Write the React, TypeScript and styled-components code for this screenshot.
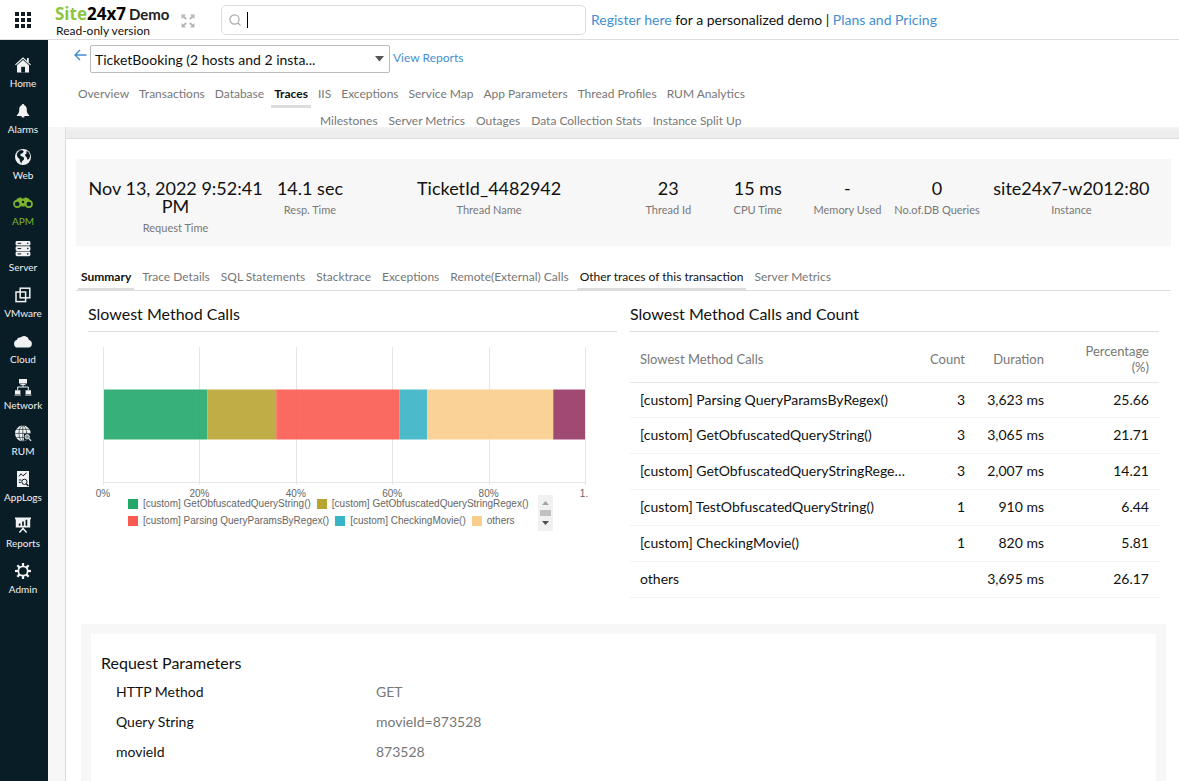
import React from "react";
import styled, { createGlobalStyle, css } from "styled-components";

const GlobalStyle = createGlobalStyle`
  * { box-sizing: border-box; }
  body {
    margin: 0;
    background: #fff;
    color: #111;
    font-family: Lato, "Liberation Sans", sans-serif;
    font-size: 14px;
  }
  h1, h2, p, dl, dd, ul { margin: 0; padding: 0; font-weight: 400; }
  button { font: inherit; border: 0; background: none; padding: 0; color: inherit; cursor: pointer; }
  a { text-decoration: none; }
`;

const Page = styled.div`
  min-height: 100vh;
  display: flex;
  flex-direction: column;
`;

const TopBar = styled.header`
  height: 40px;
  display: flex;
  align-items: center;
  border-bottom: 1px solid #ddd;
`;

const AppsButton = styled.button`
  width: 16px;
  height: 16px;
  margin: 0 24px 0 15px;
  display: flex;
`;

const Brand = styled.div`
  width: 126px;
  padding-top: 3px;
  display: flex;
  flex-direction: column;
`;

const BrandName = styled.div`
  display: flex;
  align-items: baseline;
  gap: 3px;
  font: 700 17px/20px "Open Sans", sans-serif;
  color: #000;
`;

const BrandGreen = styled.span`
  color: #8cc63f;
`;

const DemoWord = styled.span`
  font: 700 15px/20px Lato, sans-serif;
  color: #222;
`;

const BrandNote = styled.div`
  padding-left: 1px;
  font-size: 12px;
  line-height: 14px;
`;

const ExpandButton = styled.button`
  display: flex;
  width: 14px;
  height: 14px;
  margin-top: 2px;
`;

const SearchBox = styled.label`
  display: flex;
  align-items: center;
  flex: 0 1 365px;
  height: 30px;
  margin: 0 5px 0 26px;
  padding: 0 7px;
  border: 1px solid #ddd;
  border-radius: 5px;
`;

const Caret = styled.span`
  width: 1px;
  height: 16px;
  margin-left: 6px;
  background: #000;
`;

const SearchInput = styled.input`
  flex: 1;
  min-width: 0;
  border: 0;
  outline: 0;
  background: none;
  font: inherit;
`;

const Promo = styled.p`
  font-size: 14px;
  line-height: 18px;
  white-space: nowrap;
`;

const Link = styled.a<{ $small?: boolean }>`
  color: #3f8fd2;
  font-size: ${(p) => (p.$small ? 12 : 14)}px;
`;

const Body = styled.div`
  flex: 1;
  display: flex;
`;

const SideBar = styled.nav`
  width: 48px;
  flex: none;
  padding: 11px 2px 0 0;
  background: #091d27;
`;

const SideLink = styled.a<{ $active?: boolean }>`
  height: 46px;
  display: flex;
  flex-direction: column;
  align-items: center;
  gap: 1px;
  padding-top: 4px;
  color: ${(p) => (p.$active ? "#7db32f" : "#f2f2f2")};
  font-size: 10px;
  line-height: 14px;
`;

const Main = styled.main`
  flex: 1;
  min-width: 0;
  display: flex;
  flex-direction: column;
`;

const MonitorHead = styled.div`
  height: 87px;
  flex: none;
`;

const MonitorRow = styled.div`
  display: flex;
  align-items: flex-start;
  padding: 5px 0 0 26px;
`;

const BackButton = styled.button`
  display: flex;
  width: 13px;
  height: 12px;
  margin: 4px 3px 0 0;
  color: #3f8fd2;
`;

const SelectWrap = styled.div`
  display: grid;
  width: 300px;
  margin-right: 3px;
  align-items: center;
  & > * { grid-area: 1 / 1; }
`;

const MonitorSelect = styled.select`
  appearance: none;
  height: 28px;
  padding: 2px 4px 0;
  border: 1px solid #bbb;
  border-radius: 2px;
  background: #fff;
  color: #111;
  font: 14px/20px Lato, sans-serif;
`;

const SelectArrow = styled.svg`
  justify-self: end;
  margin-right: 6px;
  pointer-events: none;
`;

const ReportsSlot = styled.div`
  padding-top: 4px;
  line-height: 16px;
`;

const TabRow = styled.div<{ $second?: boolean; $lined?: boolean }>`
  display: flex;
  gap: ${(p) => (p.$second || p.$lined ? 5 : 4)}px;
  padding-left: ${(p) => (p.$second ? 269 : 27)}px;
  margin-top: ${(p) => (p.$second ? 1 : 9)}px;
  ${(p) =>
    p.$lined &&
    css`
      margin: 19px 0 0;
      padding-left: 2px;
      border-bottom: 1px solid #ddd;
    `}
`;

const Tab = styled.button<{ $bold?: boolean; $on?: boolean; $flush?: boolean }>`
  padding: 4px 3px 3px;
  border-bottom: ${(p) => (p.$flush ? 2 : 3)}px solid ${(p) => (p.$on ? "#ddd" : "transparent")};
  color: ${(p) => (p.$on ? "#111" : "#777")};
  font-size: 12px;
  font-weight: ${(p) => (p.$bold ? 700 : 400)};
  line-height: 16px;
  white-space: nowrap;
`;

const Canvas = styled.div`
  flex: 1;
  display: flex;
  padding-left: 17px;
  background: #f7f7f7;
`;

const Panel = styled.div`
  flex: 1;
  min-width: 0;
  display: flex;
  flex-direction: column;
  border-left: 1px solid #ddd;
  background: #fff;
`;

const Band = styled.div`
  height: 12px;
  flex: none;
  background: linear-gradient(#f4f4f4, #ededed 5px);
  border-bottom: 1px solid #ddd;
`;

const PanelBody = styled.div`
  flex: 1;
  display: flex;
  flex-direction: column;
  padding: 20px 8px 0 10px;
`;

const Stats = styled.dl`
  display: grid;
  grid-template-columns: 2fr 1fr 3fr 1fr 1fr 1fr 1fr 2fr;
  padding: 20px 10px 10px;
  background: #f7f7f7;
`;

const Stat = styled.div`
  display: flex;
  flex-direction: column-reverse;
  justify-content: flex-end;
  gap: 5px;
  text-align: center;
`;

const StatLabel = styled.dt`
  color: #777;
  font-size: 11px;
  line-height: 16px;
  white-space: nowrap;
`;

const StatValue = styled.dd`
  font-size: 18px;
  line-height: 18px;
`;

const Columns = styled.div`
  display: grid;
  grid-template-columns: 1fr 1fr;
  gap: 13px;
  padding: 13px 12px 0;
`;

const Section = styled.section`
  min-width: 0;
`;

const SectionTitle = styled.h2<{ $lined?: boolean }>`
  padding-bottom: ${(p) => (p.$lined ? 7 : 0)}px;
  border-bottom: ${(p) => (p.$lined ? "1px solid #ddd" : 0)};
  font-size: 16px;
  line-height: 20px;
`;

const ChartBox = styled.div`
  padding-top: 15px;
`;

const Legend = styled.div`
  display: flex;
  gap: 6px;
  padding-left: 40px;
  margin-top: -4px;
  color: #666;
  font: 10px/17px "Liberation Sans", sans-serif;
`;

const LegendItems = styled.ul`
  width: 404px;
  display: flex;
  flex-wrap: wrap;
  align-content: flex-start;
  column-gap: 6px;
  list-style: none;
`;

const LegendItem = styled.li<{ $color: string }>`
  display: flex;
  align-items: center;
  gap: 5px;
  white-space: nowrap;
  &::before {
    content: "";
    width: 10px;
    height: 10px;
    background: ${(p) => p.$color};
  }
`;

const LegendScroll = styled.div`
  width: 15px;
  height: 36px;
  display: flex;
  flex-direction: column;
  align-items: center;
  justify-content: space-between;
  padding: 6px 0;
  background: #f1f1f1;
`;

const ScrollArrow = styled.button<{ $dim?: boolean }>`
  display: flex;
  color: ${(p) => (p.$dim ? "#a3a3a3" : "#505050")};
`;

const ScrollThumb = styled.div`
  width: 11px;
  height: 6px;
  background: #c1c1c1;
`;

const Table = styled.table`
  width: 100%;
  table-layout: fixed;
  border-collapse: collapse;
  tbody tr:first-child td { height: 35px; }
`;

const Th = styled.th<{ $w?: number }>`
  width: ${(p) => (p.$w ? p.$w + "px" : "auto")};
  height: 50px;
  padding: 5px 10px 0;
  border-bottom: 1px solid #e8e8e8;
  color: #777;
  font-size: 13px;
  font-weight: 400;
  line-height: 16px;
  text-align: ${(p) => (p.$w ? "right" : "left")};
`;

const Td = styled.td<{ $num?: boolean }>`
  height: 36px;
  padding: 0 10px;
  border-bottom: 1px solid #f3f3f3;
  font-size: 14px;
  line-height: 16px;
  text-align: ${(p) => (p.$num ? "right" : "left")};
  white-space: nowrap;
  overflow: hidden;
  text-overflow: ellipsis;
`;

const Params = styled.section`
  flex: 1;
  margin: 26px 5px 0;
  padding: 19px 0 15px 10px;
  border: 10px solid #f7f7f7;
  border-bottom: 0;
`;

const ParamList = styled.dl`
  padding-top: 4px;
`;

const ParamRow = styled.div`
  display: grid;
  grid-template-columns: 1fr 3fr;
  padding-left: 15px;
  font-size: 14px;
  line-height: 30px;
`;

const ParamValue = styled.dd`
  color: #777;
`;

type IconName =
  | "home" | "bell" | "web" | "apm" | "server" | "vm"
  | "cloud" | "network" | "rum" | "logs" | "reports" | "admin";

const BG = "#091d27";

const drawings: Record<IconName, React.ReactNode> = {
  home: (
    <>
      <path d="M10 4.600 4 9.800V17.600H16V9.800Z" />
      <path d="M14 3h1.800v4h-1.800z" />
      <path d="M2.400 9.800 10 3l7.600 6.800" fill="none" stroke="currentColor" strokeWidth="1.100" />
      <path d="M3.400 10.600 10 4.700l6.600 5.900" fill="none" stroke={BG} strokeWidth=".6" />
      <path d="M8.200 11.800h3.800v5.800H8.200z" fill={BG} />
    </>
  ),
  bell: (
    <path d="M10 3c-.8 0-1.300.6-1.300 1.300C6.800 4.900 6.200 6.800 6.200 9c0 2.600-.8 4-2.400 5.200v.8h4.600a1.600 1.600 0 0 0 3.200 0h4.600v-.8c-1.600-1.200-2.400-2.600-2.400-5.200 0-2.200-.6-4.100-2.500-4.700 0-.7-.5-1.300-1.300-1.300Z" />
  ),
  web: (
    <>
      <circle cx="10" cy="10" r="8" />
      <path d="M6.500 3.600 9.400 3l1.400 1.800-1.600 1.600-1.400.4-.6 1.800 2 .8 2 1.400-.4 2-1.800 1.400-.6 2.400-1.400-2-.4-2.600-1.800-1.400-1-2.400.4-2Z" fill={BG} />
      <path d="m13.200 4.200 1.800.4 1.600 2.400.6 2-1.200 3-1.600.8-.6-2.400-1.400-1.200-.4-1.800 1.600-1Z" fill={BG} />
    </>
  ),
  apm: (
    <>
      <circle cx="4.200" cy="11" r="3.200" fill="none" stroke="currentColor" strokeWidth="1.700" />
      <circle cx="15.800" cy="11" r="3.200" fill="none" stroke="currentColor" strokeWidth="1.700" />
      <path d="M.8 9.400 4.400 5.400 7.600 4.200l1.400 1.400h2l1.400-1.400 3.200 1.200 3.600 4-3.200-1.600-3.400 2-1 3.600h-3.200l-1-3.600-3.400-2Z" />
      <circle cx="10" cy="9" r="1.200" fill={BG} />
    </>
  ),
  server: (
    <>
      {[2, 7.300, 12.600].map((y) => (
        <g key={y}>
          <rect x="2.600" y={y} width="14.800" height="4.600" rx="1.400" />
          <path d={`M4.600 ${y + 2.300}h3.600`} stroke={BG} strokeWidth="1" />
          <circle cx="14.800" cy={y + 2.300} r=".8" fill={BG} />
        </g>
      ))}
    </>
  ),
  vm: (
    <g fill="none" stroke="currentColor" strokeWidth="1.500">
      <rect x="7.200" y="3.200" width="9.600" height="9.600" />
      <rect x="3" y="7" width="9.600" height="9.600" />
    </g>
  ),
  cloud: (
    <path d="M4.600 16.600a3.900 3.900 0 0 1-.8-7.600 3 3 0 0 1 3.600-2.400A5 5 0 0 1 16 9a3.900 3.900 0 0 1-.4 7.600Z" />
  ),
  network: (
    <>
      <path d="M6 2h8v4.600H6zM2 13.200h5.400V17H2zM12.600 13.200H18V17h-5.400z" />
      <path d="M7.400 7.600h5.200M1.600 18h6.200M12.200 18h6.200M10 6.600V10M4.700 13v-3h10.600v3" fill="none" stroke="currentColor" strokeWidth="1" />
    </>
  ),
  rum: (
    <>
      <circle cx="9.800" cy="10.400" r="7.800" />
      <g fill="none" stroke={BG} strokeWidth=".6">
        <ellipse cx="9.800" cy="10.400" rx="3.800" ry="7.800" />
        <path d="M9.800 2.600v15.600M2 10.400h15.600M3.400 6.400h12.800M3.400 14.400h12.800" />
      </g>
      <path d="M11 10.600h7v7h-7z" fill={BG} />
      <circle cx="14.200" cy="13.800" r="2.200" fill="#8d959a" stroke="currentColor" strokeWidth=".8" />
      <path d="m16 15.600 2 2.200" stroke="currentColor" strokeWidth="1.200" />
    </>
  ),
  logs: (
    <>
      <path d="M4 2h12v16H4z" />
      <g fill="none" stroke={BG} strokeWidth="1">
        <path d="m6 7.400 2-2.600 2 2 3.600-3M5.800 11h2.600M5.800 13.400h2" />
        <circle cx="11.400" cy="12.800" r="2.600" />
        <path d="m13.200 14.800 2.200 2.200" strokeWidth="1.400" />
      </g>
    </>
  ),
  reports: (
    <>
      <path d="M2 2.400h16v1.800h-.8v8.400H2.800V4.200H2z" />
      <path d="M6.600 8.400v2.400M10 6.400v4.400M13.400 4.800v6" stroke={BG} strokeWidth="1.700" />
      <path d="M10 12.400v2.600M10 13.600l-3.600 4M10 13.600l3.600 4" stroke="currentColor" strokeWidth="1.500" />
    </>
  ),
  admin: (
    <g fill="none" stroke="currentColor">
      <circle cx="10" cy="10" r="4.700" strokeWidth="1.700" />
      {[0, 45, 90, 135, 180, 225, 270, 315].map((a) => (
        <path key={a} d="M10 2v3.200" strokeWidth="2.200" transform={`rotate(${a} 10 10)`} />
      ))}
    </g>
  ),
};

const SideIcon = ({ name }: { name: IconName }) => (
  <svg width="20" height="20" viewBox="0 0 20 20" fill="currentColor" aria-hidden="true">
    {drawings[name]}
  </svg>
);

const sideItems: [IconName, string][] = [
  ["home", "Home"],
  ["bell", "Alarms"],
  ["web", "Web"],
  ["apm", "APM"],
  ["server", "Server"],
  ["vm", "VMware"],
  ["cloud", "Cloud"],
  ["network", "Network"],
  ["rum", "RUM"],
  ["logs", "AppLogs"],
  ["reports", "Reports"],
  ["admin", "Admin"],
];

const tabsTop = ["Overview", "Transactions", "Database", "Traces", "IIS", "Exceptions", "Service Map", "App Parameters", "Thread Profiles", "RUM Analytics"];
const tabsMore = ["Milestones", "Server Metrics", "Outages", "Data Collection Stats", "Instance Split Up"];
const traceTabs = ["Summary", "Trace Details", "SQL Statements", "Stacktrace", "Exceptions", "Remote(External) Calls", "Other traces of this transaction", "Server Metrics"];

const stats = [
  ["Request Time", "Nov 13, 2022 9:52:41 PM"],
  ["Resp. Time", "14.1 sec"],
  ["Thread Name", "TicketId_4482942"],
  ["Thread Id", "23"],
  ["CPU Time", "15 ms"],
  ["Memory Used", "-"],
  ["No.of.DB Queries", "0"],
  ["Instance", "site24x7-w2012:80"],
];

const segments: [number, string][] = [
  [21.500, "#22a76b"],
  [14.300, "#b9a432"],
  [25.600, "#f95a50"],
  [5.800, "#37b4c5"],
  [26.200, "#f9cd8c"],
  [6.600, "#963664"],
];

const legend = [
  ["[custom] GetObfuscatedQueryString()", "#22a76b"],
  ["[custom] GetObfuscatedQueryStringRegex()", "#b9a432"],
  ["[custom] Parsing QueryParamsByRegex()", "#f95a50"],
  ["[custom] CheckingMovie()", "#37b4c5"],
  ["others", "#f9cd8c"],
];

const calls = [
  ["[custom] Parsing QueryParamsByRegex()", "3", "3,623 ms", "25.66"],
  ["[custom] GetObfuscatedQueryString()", "3", "3,065 ms", "21.71"],
  ["[custom] GetObfuscatedQueryStringRegex()", "3", "2,007 ms", "14.21"],
  ["[custom] TestObfuscatedQueryString()", "1", "910 ms", "6.44"],
  ["[custom] CheckingMovie()", "1", "820 ms", "5.81"],
  ["others", "", "3,695 ms", "26.17"],
];

const params = [
  ["HTTP Method", "GET"],
  ["Query String", "movieId=873528"],
  ["movieId", "873528"],
];

const PLOT_X = 15;
const PLOT_W = 482;

const StackedBar = () => {
  let start = 0;
  return (
    <svg width="502" height="152" role="img" aria-label="Slowest method calls by share" style={{ display: "block" }}>
      <g stroke="#e6e6e6">
        {[0, 20, 40, 60, 80, 100].map((t) => {
          const x = Math.round(PLOT_X + (PLOT_W * t) / 100) + 0.5;
          return <line key={t} x1={x} x2={x} y1="0" y2="138" />;
        })}
        <line x1={PLOT_X} x2={PLOT_X + PLOT_W} y1="135.500" y2="135.500" />
      </g>
      {segments.map(([share, color]) => {
        const x = PLOT_X + 1 + ((PLOT_W - 1) * start) / 100;
        start += share;
        return (
          <rect key={color} x={x} y="42.500" width={((PLOT_W - 1) * share) / 100} height="50" fill={color} fillOpacity="0.9" />
        );
      })}
      <g fill="#666" fontFamily="Liberation Sans, sans-serif" fontSize="10" textAnchor="middle">
        {[0, 20, 40, 60, 80].map((t) => (
          <text key={t} x={PLOT_X + (PLOT_W * t) / 100} y="150">{t}%</text>
        ))}
        <text x="496" y="150">1.</text>
      </g>
    </svg>
  );
};

export default function App() {
  return (
    <Page>
      <GlobalStyle />
      <TopBar>
        <AppsButton aria-label="Apps">
          <svg width="16" height="16" fill="#111d26">
            {[0, 6, 12].map((y) => [0, 6, 12].map((x) => <rect key={`${x}-${y}`} x={x} y={y} width="4" height="4" />))}
          </svg>
        </AppsButton>
        <Brand>
          <BrandName>
            <span><BrandGreen>Site</BrandGreen>24x7</span>
            <DemoWord>Demo</DemoWord>
          </BrandName>
          <BrandNote>Read-only version</BrandNote>
        </Brand>
        <ExpandButton aria-label="Full screen">
          <svg width="14" height="14" fill="#b5b5b5" stroke="#b5b5b5" strokeWidth="1.800">
            {[0, 90, 180, 270].map((a) => (
              <g key={a} transform={`rotate(${a} 7 7)`}>
                <path d="M.5.5H5L.5 5Z" stroke="none" />
                <path d="m2 2 3.200 3.200" />
              </g>
            ))}
          </svg>
        </ExpandButton>
        <SearchBox>
          <svg width="12" height="12" fill="none" stroke="#aaa" strokeWidth="1.200" aria-hidden="true">
            <circle cx="5.500" cy="5.500" r="4.600" />
            <path d="m9 9 2.600 2.600" />
          </svg>
          <Caret />
          <SearchInput type="text" aria-label="Search" />
        </SearchBox>
        <Promo>
          <Link href="#register">Register here</Link> for a personalized demo | <Link href="#plans">Plans and Pricing</Link>
        </Promo>
      </TopBar>
      <Body>
        <SideBar aria-label="Products">
          {sideItems.map(([icon, label]) => (
            <SideLink key={icon} href={`#${icon}`} $active={icon === "apm"}>
              <SideIcon name={icon} />
              {label}
            </SideLink>
          ))}
        </SideBar>
        <Main>
          <MonitorHead>
            <MonitorRow>
              <BackButton aria-label="Back">
                <svg width="13" height="12" fill="none" stroke="currentColor" strokeWidth="1.400">
                  <path d="M12.500 6H1M6 1 1 6l5 5" />
                </svg>
              </BackButton>
              <SelectWrap>
                <MonitorSelect aria-label="Monitor">
                  <option>TicketBooking (2 hosts and 2 insta...</option>
                </MonitorSelect>
                <SelectArrow width="9" height="6" fill="#555"><path d="M0 0h9L4.500 5.500Z" /></SelectArrow>
              </SelectWrap>
              <ReportsSlot><Link $small href="#reports">View Reports</Link></ReportsSlot>
            </MonitorRow>
            <TabRow>
              {tabsTop.map((t) => (
                <Tab key={t} $on={t === "Traces"} $bold={t === "Traces"}>{t}</Tab>
              ))}
            </TabRow>
            <TabRow $second>
              {tabsMore.map((t) => (
                <Tab key={t}>{t}</Tab>
              ))}
            </TabRow>
          </MonitorHead>
          <Canvas>
            <Panel>
              <Band />
              <PanelBody>
                <Stats>
                  {stats.map(([label, value]) => (
                    <Stat key={label}>
                      <StatLabel>{label}</StatLabel>
                      <StatValue>{value}</StatValue>
                    </Stat>
                  ))}
                </Stats>
                <TabRow $lined>
                  {traceTabs.map((t) => (
                    <Tab key={t} $flush $bold={t === "Summary"} $on={t === "Summary" || t.startsWith("Other")}>{t}</Tab>
                  ))}
                </TabRow>
                <Columns>
                  <Section>
                    <SectionTitle $lined>Slowest Method Calls</SectionTitle>
                    <ChartBox>
                      <StackedBar />
                      <Legend>
                        <LegendItems>
                          {legend.map(([label, color]) => (
                            <LegendItem key={label} $color={color}>{label}</LegendItem>
                          ))}
                        </LegendItems>
                        <LegendScroll>
                          <ScrollArrow $dim aria-label="Previous entries">
                            <svg width="7" height="4" fill="currentColor"><path d="M0 4h7L3.500 0Z" /></svg>
                          </ScrollArrow>
                          <ScrollThumb />
                          <ScrollArrow aria-label="More entries">
                            <svg width="7" height="4" fill="currentColor"><path d="M0 0h7L3.500 4Z" /></svg>
                          </ScrollArrow>
                        </LegendScroll>
                      </Legend>
                    </ChartBox>
                  </Section>
                  <Section>
                    <SectionTitle $lined>Slowest Method Calls and Count</SectionTitle>
                    <Table>
                      <thead>
                        <tr>
                          <Th>Slowest Method Calls</Th>
                          <Th $w={58}>Count</Th>
                          <Th $w={79}>Duration</Th>
                          <Th $w={105}>Percentage<br />(%)</Th>
                        </tr>
                      </thead>
                      <tbody>
                        {calls.map(([name, ...nums]) => (
                          <tr key={name}>
                            <Td>{name}</Td>
                            {nums.map((n, i) => (
                              <Td key={i} $num>{n}</Td>
                            ))}
                          </tr>
                        ))}
                      </tbody>
                    </Table>
                  </Section>
                </Columns>
                <Params>
                  <SectionTitle>Request Parameters</SectionTitle>
                  <ParamList>
                    {params.map(([k, v]) => (
                      <ParamRow key={k}>
                        <dt>{k}</dt>
                        <ParamValue>{v}</ParamValue>
                      </ParamRow>
                    ))}
                  </ParamList>
                </Params>
              </PanelBody>
            </Panel>
          </Canvas>
        </Main>
      </Body>
    </Page>
  );
}
